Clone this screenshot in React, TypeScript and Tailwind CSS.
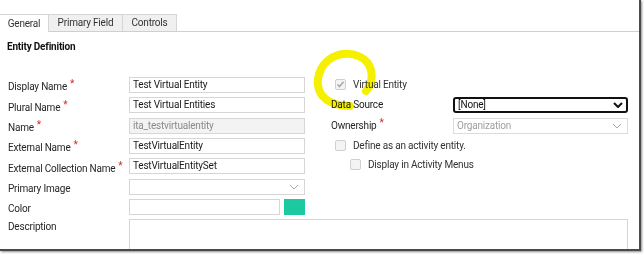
import React from "react";

const Star = () => <span className="text-[#d52b1e] text-[10px] ml-[3px] relative -top-[3px]">*</span>;

const Label = ({ text, req }: { text: string; req?: boolean }) => (
  <div className="w-[121px] shrink-0 flex items-center text-[#262626] whitespace-nowrap">
    <span>{text}</span>
    {req && <Star />}
  </div>
);

const Input = ({ value, disabled, w = "w-[176px]" }: { value?: string; disabled?: boolean; w?: string }) => (
  <div
    className={`${w} h-[16px] border border-[#d6d6d6] flex items-center px-[3px] ${
      disabled ? "bg-[#f3f3f3] text-[#8a8a8a]" : "bg-white text-[#1a1a1a]"
    }`}
  >
    {value}
  </div>
);

const Chevron = ({ bold }: { bold?: boolean }) => (
  <svg width="10" height="6" viewBox="0 0 10 6" className="shrink-0">
    <path
      d="M1 1 L5 5 L9 1"
      fill="none"
      stroke={bold ? "#111" : "#a8a8a8"}
      strokeWidth={bold ? 2 : 1}
    />
  </svg>
);

const Checkbox = ({ checked }: { checked?: boolean }) => (
  <div className="w-[11px] h-[11px] rounded-[2px] border border-[#cfcfcf] bg-[#f4f4f4] flex items-center justify-center shrink-0">
    {checked && (
      <svg width="9" height="9" viewBox="0 0 9 9">
        <path d="M1.5 4.5 L3.5 6.5 L7.5 1.8" fill="none" stroke="#a9a9a9" strokeWidth="1.6" />
      </svg>
    )}
  </div>
);

export default function App() {
  return (
    <div
      className="w-[644px] h-[255px] bg-white relative overflow-hidden text-[10px] leading-none tracking-[-0.2px]"
      style={{ fontFamily: 'Roboto, "Noto Sans", sans-serif' }}
    >
      <div className="w-[641px] h-[251px] border-r-[2px] border-b-[2px] border-[#4a4a4a] shadow-[1px_1px_2px_rgba(0,0,0,0.45)] overflow-hidden">
        {/* Tabs */}
        <div className="mt-[14px] h-[18px] flex border-b border-[#cfcfcf]">
          <div className="w-[49px] h-[18px] bg-white border-r border-t border-[#d6d6d6] flex items-center justify-center text-[#333] relative -mb-px">
            General
          </div>
          <div className="w-[74px] bg-[#f0f0f0] border-t border-r border-[#d6d6d6] flex items-center justify-center text-[#333]">
            Primary Field
          </div>
          <div className="w-[54px] bg-[#f0f0f0] border-t border-r border-[#d6d6d6] flex items-center justify-center text-[#333]">
            Controls
          </div>
        </div>

        <div className="ml-[7px] mt-[10px] font-bold text-[#111]">Entity Definition</div>

        <div className="flex mt-[25px] ml-[8px]">
          {/* Left column */}
          <div className="flex flex-col w-[297px]">
            <div className="flex h-[20px]">
              <Label text="Display Name" req />
              <Input value="Test Virtual Entity" />
            </div>
            <div className="flex h-[21px]">
              <Label text="Plural Name" req />
              <Input value="Test Virtual Entities" />
            </div>
            <div className="flex h-[20px]">
              <Label text="Name" req />
              <Input value="ita_testvirtualentity" disabled />
            </div>
            <div className="flex h-[20px]">
              <Label text="External Name" req />
              <Input value="TestVirtualEntity" />
            </div>
            <div className="flex h-[21px]">
              <Label text="External Collection Name" req />
              <Input value="TestVirtualEntitySet" />
            </div>
            <div className="flex h-[20px]">
              <Label text="Primary Image" />
              <div className="w-[176px] h-[16px] border border-[#d6d6d6] flex items-center justify-end pr-[5px]">
                <Chevron />
              </div>
            </div>
            <div className="flex h-[20px]">
              <Label text="Color" />
              <Input value="" w="w-[151px]" />
              <div className="w-[21px] h-[16px] bg-[#1cc9a0] ml-[4px]" />
            </div>
          </div>

          {/* Right column */}
          <div className="flex flex-col ml-[26px] w-[297px]">
            <div className="flex items-center h-[20px] pl-[4px] pb-[5px]">
              <Checkbox checked />
              <span className="ml-[7px] text-[#333]">Virtual Entity</span>
            </div>
            <div className="flex h-[21px] items-start">
              <div className="w-[122px] h-[16px] flex items-center text-[#1a1a1a]">Data Source</div>
              <div className="w-[175px] h-[16px] border-2 border-[#111] rounded-[3px] flex items-center justify-between px-[3px] text-[#111]">
                <span>[None]</span>
                <Chevron bold />
              </div>
            </div>
            <div className="flex h-[20px] items-start">
              <div className="w-[122px] h-[16px] flex items-center text-[#262626]">
                Ownership
                <Star />
              </div>
              <div className="w-[175px] h-[16px] border border-[#dcdcdc] flex items-center justify-between px-[3px] pr-[5px] text-[#a0a0a0]">
                <span>Organization</span>
                <Chevron />
              </div>
            </div>
            <div className="flex items-center h-[19px] pl-[4px] pb-[5px]">
              <Checkbox />
              <span className="ml-[7px] text-[#333] relative top-[1px]">Define as an activity entity.</span>
            </div>
            <div className="flex items-center h-[14px] pl-[19px]">
              <Checkbox />
              <span className="ml-[7px] text-[#333] relative top-[1px]">Display in Activity Menus</span>
            </div>
          </div>
        </div>

        {/* Description */}
        <div className="flex ml-[8px]">
          <div className="w-[121px] shrink-0 text-[#262626] pt-[3px]">Description</div>
          <div className="w-[499px] h-[40px] border border-[#d6d6d6]" />
        </div>
      </div>

      {/* Yellow highlighter mark */}
      <svg
        className="absolute left-0 top-0 pointer-events-none mix-blend-multiply"
        width="644"
        height="255"
      >
        <path
          d="M350 106 C334 106 323 100 319 90 C315 76 322 60 338 55 C354 51 368 58 371 70 C373 80 370 87 366 91"
          fill="none"
          stroke="#f5f000"
          strokeWidth="8"
          strokeLinecap="round"
        />
      </svg>
    </div>
  );
}
